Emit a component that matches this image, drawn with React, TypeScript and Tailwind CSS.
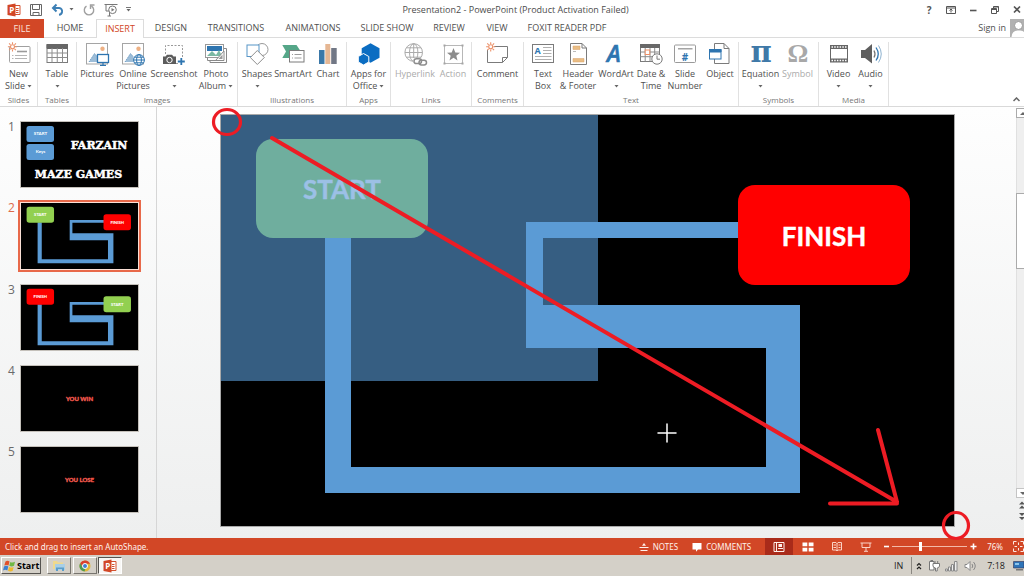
import type { ReactNode } from "react";

const BLUE = "#2e75b0";
const GRAY = "#7b7b7b";

function Glyph({ children }: { children: ReactNode }) {
  return (
    <svg viewBox="0 0 24 24" className="size-6 shrink-0 overflow-visible" fill="none" stroke={GRAY} strokeWidth="1" aria-hidden="true">
      {children}
    </svg>
  );
}

function Caret({ className = "" }: { className?: string }) {
  return (
    <svg viewBox="0 0 5 3" className={`inline-block h-[3px] w-[5px] shrink-0 ${className}`} aria-hidden="true">
      <path d="M0.5 0h4L2.5 2.5z" fill="#666" />
    </svg>
  );
}

function Burst({ x, y }: { x: number; y: number }) {
  return (
    <g transform={`translate(${x} ${y})`} stroke="#ec9169" strokeWidth="1.1">
      <circle r="2" fill="#fff" />
      <path d="M0-4.6V-2.6M0 2.6V4.6M-4.6 0H-2.6M2.6 0H4.6M-3.4-3.4L-2-2M2 2L3.4 3.4M-3.4 3.4L-2 2M2-2L3.4-3.4" />
    </g>
  );
}

function Photo() {
  return (
    <>
      <rect x="1.5" y="1.5" width="21" height="20.5" fill="#fff" stroke="#a5a5a5" />
      <circle cx="17.5" cy="6.8" r="2.2" fill="#eeb184" stroke="none" />
      <path d="M4 20L9.5 11.5L12.5 15V20z" fill="#9dbdd8" stroke="none" />
      <path d="M4 20L9.5 11.5L12.5 15" stroke="#6d9cc3" strokeDasharray="1.5 1" />
    </>
  );
}

const icons: Record<string, ReactNode> = {
  newSlide: (
    <Glyph>
      <rect x="2.5" y="4.5" width="20.500" height="16" rx="1" fill="#fff" stroke="#a0a0a0" />
      <path d="M10 9.500H20" stroke="#9a9a9a" strokeWidth="1.600" />
      <path d="M5 13.500H6.500M8 13.500H20M5 16.500H6.500M8 16.500H20" stroke="#b5b5b5" />
      <Burst x={5.500} y={4.800} />
    </Glyph>
  ),
  table: (
    <Glyph>
      <rect x="2" y="2.500" width="20.500" height="18" fill="#fff" />
      <path d="M2 2.500H22.500V6.500H2z" fill="#666" stroke="#666" />
      <path d="M2 11H22.500M2 15.500H22.500M7 6V20.500M12.250 6V20.500M17.500 6V20.500" stroke="#8d8d8d" />
    </Glyph>
  ),
  pictures: (
    <Glyph>
      <Photo />
      <rect x="12.500" y="12.500" width="11" height="8" fill="#fff" stroke={BLUE} strokeWidth="1.300" />
      <path d="M18 20.500V23M15 23.300H21" stroke={BLUE} strokeWidth="1.200" />
    </Glyph>
  ),
  online: (
    <Glyph>
      <Photo />
      <g stroke={BLUE}>
        <circle cx="18" cy="18" r="5.400" fill="#fff" />
        <ellipse cx="18" cy="18" rx="2.400" ry="5.400" />
        <path d="M12.600 18H23.400M13.500 15.200H22.500M13.500 20.800H22.500" />
      </g>
    </Glyph>
  ),
  screenshot: (
    <Glyph>
      <path d="M3.500 12V3.500H20.500V15M14 21.500H16" stroke="#999" strokeDasharray="2 1.500" />
      <path d="M1 14.500H3.500L5 12.800H10L11.500 14.500H14V22H1z" fill="#5c5c5c" stroke="none" />
      <circle cx="7.500" cy="18" r="2.700" fill="#5c5c5c" stroke="#fff" />
      <path d="M19.300 16V23M15.800 19.500H22.800" stroke={BLUE} strokeWidth="1.800" />
    </Glyph>
  ),
  album: (
    <Glyph>
      <rect x="1.500" y="2.500" width="18" height="13" fill="#fff" stroke="#999" />
      <rect x="3" y="4" width="15" height="5" fill={BLUE} stroke="none" />
      <path d="M3 14L8 9L12 13L15 8L18 14z" fill="#7bb9a3" stroke="none" />
      <path d="M20 6.500H22.500V20.500H6V18.500" stroke="#888" />
      <path d="M20 9L11.500 18.500H20z" fill="#fff" stroke="#8a8a8a" />
      <path d="M3.500 15.500V18.500H12" stroke="#8a8a8a" />
      <path d="M14.500 17L18.500 12.500V17z" fill="#9a9a9a" stroke="none" />
    </Glyph>
  ),
  shapes: (
    <Glyph>
      <circle cx="17" cy="7.500" r="6" fill="#fff" stroke="#999" />
      <rect x="2" y="3" width="12" height="11.500" fill="#fff" stroke="#5796c8" />
      <path d="M12.300 8.500L19.300 15.500L12.300 22.500L5.300 15.500z" fill="#fff" stroke="#8d8d8d" />
    </Glyph>
  ),
  smartart: (
    <Glyph>
      <path d="M1.300 3H15.500L19.500 9H8V16H1.300L5 9.500z" fill="#55a688" stroke="none" />
      <rect x="8.500" y="8.500" width="14.500" height="11.500" fill="#fff" />
      <path d="M11 12.500H12M13.500 12.500H20.500M11 16H12M13.500 16H20.500" stroke="#9c9c9c" />
    </Glyph>
  ),
  chart: (
    <Glyph>
      <g stroke="none">
        <rect x="3" y="8" width="5.500" height="14" fill="#3a78a8" />
        <rect x="9.300" y="2" width="5" height="20" fill="#e6b793" />
        <rect x="15.200" y="6" width="5.500" height="16" fill="#717785" />
      </g>
    </Glyph>
  ),
  apps: (
    <Glyph>
      <g fill="#0b6dc2">
        <path d="M13.500 1.200L22.500 6.200V15.800L13.500 20.800L4.700 15.800V6.200z" stroke="none" />
        <path d="M6.500 11.500L11.800 14.500V20L6.500 23L1.300 20V14.500z" stroke="#fff" />
      </g>
    </Glyph>
  ),
  hyperlink: (
    <Glyph>
      <g stroke="#ababab">
        <circle cx="10.700" cy="10.500" r="8.800" />
        <ellipse cx="10.700" cy="10.500" rx="4.200" ry="8.800" />
        <path d="M10.700 1.700V19.300M2 10.500H19.500M3.500 5.800H18M3.500 15.200H18" />
      </g>
      <path d="M10 16H24V24H10z" fill="#fff" stroke="none" />
      <g stroke="#8d8d8d" strokeWidth="1.500">
        <rect x="11" y="16.800" width="7.500" height="4.800" rx="2.400" />
        <rect x="16" y="18.200" width="7.500" height="4.800" rx="2.400" />
      </g>
    </Glyph>
  ),
  action: (
    <Glyph>
      <rect x="3.500" y="3.500" width="18" height="18" stroke="#b7b7b7" />
      <path d="M2.500 2.500h2v2h-2zM20.500 2.500h2v2h-2zM2.500 20.500h2v2h-2zM20.500 20.500h2v2h-2z" fill="#a5a5a5" stroke="none" />
      <path d="M12.500 6L14.300 10.500L19 10.800L15.300 13.800L16.500 18.500L12.500 15.800L8.500 18.500L9.700 13.800L6 10.800L10.700 10.500z" fill="#8c8c8c" stroke="none" />
    </Glyph>
  ),
  comment: (
    <Glyph>
      <path d="M1.500 8V20.500H16.500L21.500 15.500V4.500H8" fill="#fff" />
      <path d="M16.500 20.500V15.500H21.500" />
      <Burst x={4.700} y={4.800} />
    </Glyph>
  ),
  textBox: (
    <Glyph>
      <rect x="1.500" y="2.500" width="21" height="18" fill="#fff" />
      <text x="3.500" y="12" fill={BLUE} stroke="none" fontSize="9" fontWeight="700">A</text>
      <path d="M12 5.500H20.500M12 8.500H20.500M12 11.500H20.500M4 14.500H20.500M4 17.500H20.500" stroke="#b0b0b0" />
    </Glyph>
  ),
  header: (
    <Glyph>
      <path d="M4.500 1.500H16L20.500 6V22.500H4.500z" fill="#fff" />
      <path d="M16 1.500V6H20.500" />
      <path d="M7 4H14V7.500H7zM7 16.500H18V20H7z" fill="#e9bd84" stroke="#d9a06a" strokeWidth="0.500" />
      <path d="M7 9.500H10" stroke="#bbb" />
    </Glyph>
  ),
  wordart: (
    <Glyph>
      <text x="3" y="20" fill={BLUE} stroke={BLUE} strokeWidth="0.600" fontSize="23" fontWeight="600" fontStyle="italic">A</text>
    </Glyph>
  ),
  date: (
    <Glyph>
      <rect x="1.500" y="2.500" width="19" height="17" fill="#fff" />
      <path d="M1.500 2.500H20.500V5.500H1.500z" fill="#686868" stroke="#686868" />
      <path d="M1.500 10H20.500M1.500 14.700H20.500M6.200 6V19.500M11 6V19.500M15.700 6V19.500" stroke="#8c8c8c" />
      <rect x="6.200" y="8" width="4.500" height="4.500" fill="#fff" stroke="#ec9169" />
      <circle cx="18" cy="17" r="5.200" fill="#fff" />
      <path d="M18 13.500V17.200H21" />
    </Glyph>
  ),
  slideNumber: (
    <Glyph>
      <rect x="1.500" y="3" width="21" height="17.500" rx="1" fill="#fff" stroke="#9a9a9a" />
      <path d="M5 6.800H19.500" stroke="#8d8d8d" strokeWidth="1.200" />
      <text x="12" y="18.500" textAnchor="middle" fill={BLUE} stroke="none" fontSize="10" fontWeight="700">#</text>
    </Glyph>
  ),
  object: (
    <Glyph>
      <path d="M6.500 1.500H16L21 6.500V21.500H6.500z" fill="#fff" />
      <path d="M16 1.500V6.500H21" />
      <rect x="1.500" y="7.500" width="11.500" height="9.500" fill="#fff" stroke={BLUE} />
      <path d="M1.500 7.500H13V10H1.500z" fill={BLUE} stroke={BLUE} />
    </Glyph>
  ),
  equation: (
    <Glyph>
      <text x="12" y="20" textAnchor="middle" fill="#3f79a8" stroke="none" fontSize="29" fontWeight="700" fontFamily="DejaVu Serif, serif">π</text>
    </Glyph>
  ),
  symbol: (
    <Glyph>
      <text x="12" y="20" textAnchor="middle" fill="#a8a8a8" stroke="none" fontSize="26" fontWeight="700" fontFamily="Liberation Serif, serif">Ω</text>
    </Glyph>
  ),
  video: (
    <Glyph>
      <rect x="3" y="3" width="18" height="17.500" fill="#666" stroke="none" />
      <rect x="4" y="7" width="16" height="9.500" fill="#fff" stroke="none" />
      <path d="M4.500 5H20M4.500 18.500H20" stroke="#fff" strokeWidth="1.600" strokeDasharray="1.500 1.200" />
    </Glyph>
  ),
  audio: (
    <Glyph>
      <path d="M2 8H6L13 2V21.500L6 16H2z" fill="#5f5f5f" stroke="none" />
      <path d="M15 8.500Q17 12 15 15.500" stroke="#777" strokeWidth="1.300" />
      <path d="M17 5.500Q21.500 12 17 18.500" stroke={BLUE} strokeWidth="1.300" />
      <path d="M19.500 3.500Q25 12 19.500 20.500" stroke="#8fb3d0" />
    </Glyph>
  ),
};

type Tool = { icon: string; lines: string[]; width: string; menu?: boolean; disabled?: boolean };
type Group = { name: string; width: string; tools: Tool[] };

const groups: Group[] = [
  { name: "Slides", width: "w-[38px]", tools: [{ icon: "newSlide", lines: ["New", "Slide"], width: "w-9", menu: true }] },
  { name: "Tables", width: "w-[39px]", tools: [{ icon: "table", lines: ["Table", ""], width: "w-9", menu: true }] },
  {
    name: "Images",
    width: "w-[161px]",
    tools: [
      { icon: "pictures", lines: ["Pictures"], width: "w-9" },
      { icon: "online", lines: ["Online", "Pictures"], width: "w-9" },
      { icon: "screenshot", lines: ["Screenshot", ""], width: "w-[46px]", menu: true },
      { icon: "album", lines: ["Photo", "Album"], width: "w-[38px]", menu: true },
    ],
  },
  {
    name: "Illustrations",
    width: "w-[109px]",
    tools: [
      { icon: "shapes", lines: ["Shapes", ""], width: "w-[34px]", menu: true },
      { icon: "smartart", lines: ["SmartArt"], width: "w-[38px]" },
      { icon: "chart", lines: ["Chart"], width: "w-8" },
    ],
  },
  { name: "Apps", width: "w-[44px]", tools: [{ icon: "apps", lines: ["Apps for", "Office"], width: "w-10", menu: true }] },
  {
    name: "Links",
    width: "w-[81px]",
    tools: [
      { icon: "hyperlink", lines: ["Hyperlink"], width: "w-[44px]", disabled: true },
      { icon: "action", lines: ["Action"], width: "w-8", disabled: true },
    ],
  },
  { name: "Comments", width: "w-[52px]", tools: [{ icon: "comment", lines: ["Comment"], width: "w-[46px]" }] },
  {
    name: "Text",
    width: "w-[215px]",
    tools: [
      { icon: "textBox", lines: ["Text", "Box"], width: "w-[34px]" },
      { icon: "header", lines: ["Header", "& Footer"], width: "w-9" },
      { icon: "wordart", lines: ["WordArt", ""], width: "w-10", menu: true },
      { icon: "date", lines: ["Date &", "Time"], width: "w-[30px]" },
      { icon: "slideNumber", lines: ["Slide", "Number"], width: "w-[38px]" },
      { icon: "object", lines: ["Object"], width: "w-8" },
    ],
  },
  {
    name: "Symbols",
    width: "w-[80px]",
    tools: [
      { icon: "equation", lines: ["Equation", ""], width: "w-[38px]", menu: true },
      { icon: "symbol", lines: ["Symbol"], width: "w-9", disabled: true },
    ],
  },
  {
    name: "Media",
    width: "w-[70px]",
    tools: [
      { icon: "video", lines: ["Video", ""], width: "w-[34px]", menu: true },
      { icon: "audio", lines: ["Audio", ""], width: "w-[30px]", menu: true },
    ],
  },
];

const tabs = [
  { name: "HOME", width: "w-[52px]" },
  { name: "INSERT", width: "w-[48px]" },
  { name: "DESIGN", width: "w-[54px]" },
  { name: "TRANSITIONS", width: "w-[76px]" },
  { name: "ANIMATIONS", width: "w-[78px]" },
  { name: "SLIDE SHOW", width: "w-[70px]" },
  { name: "REVIEW", width: "w-[54px]" },
  { name: "VIEW", width: "w-[42px]" },
  { name: "FOXIT READER PDF", width: "w-[98px]" },
];

function PowerPointMark() {
  return (
    <svg viewBox="0 0 14 14" className="size-3.5 overflow-visible" aria-hidden="true">
      <path d="M7 2.500H13V11.500H7z" fill="#fff" stroke="#d35230" />
      <path d="M9 5.500H11.500M9 7.500H11.500M9 9.500H11.500" stroke="#d35230" />
      <path d="M0.500 2L8.500 0.500V13.500L0.500 12z" fill="#d24726" />
      <text x="2.200" y="10" fill="#fff" fontSize="8" fontWeight="700">P</text>
    </svg>
  );
}

function TitleBar() {
  return (
    <header className="flex h-[19px] items-center">
      <div className="flex flex-1 items-center pl-[7px]">
        <PowerPointMark />
        <button aria-label="Save" className="ml-2">
          <svg viewBox="0 0 14 14" className="size-3.5" fill="none" stroke="#666">
            <path d="M1.500 1.500H12.500V12.500H1.500zM3.500 1.500V6.500H10.500V1.500M4 12.500V9.500H10V12.500" />
          </svg>
        </button>
        <button aria-label="Undo" className="ml-2 flex items-center gap-1">
          <svg viewBox="0 0 14 14" className="size-3.5" fill="none" stroke="#3c7fb5" strokeWidth="2">
            <path d="M5.500 1.500L2 5L5.500 8.500M2.500 5H8Q11.500 5.500 11 9Q10.500 11.500 8 11.800" />
          </svg>
          <Caret />
        </button>
        <button aria-label="Repeat" className="ml-2">
          <svg viewBox="0 0 14 14" className="size-3.5" fill="none" stroke="#a0a0a0" strokeWidth="1.400">
            <path d="M4.500 3.200A4.700 4.700 0 1 0 9.500 3.200M8.500 6V2H12.500" />
          </svg>
        </button>
        <button aria-label="Start from beginning" className="ml-2">
          <svg viewBox="0 0 14 14" className="size-3.5" fill="none" stroke="#777">
            <path d="M0.500 1.500H13.500M2 1.500V8H5M3.500 13H7M5.500 8V13" />
            <circle cx="8.500" cy="6.800" r="3.800" fill="#fff" />
            <path d="M7.500 5L10.500 6.800L7.500 8.600z" fill="#777" stroke="none" />
          </svg>
        </button>
        <button aria-label="Customize quick access" className="ml-2 flex flex-col items-center gap-px">
          <span className="h-px w-[5px] bg-[#777]" />
          <Caret />
        </button>
      </div>
      <h1 className="text-[9px] leading-3 text-[#4c4c4c]">Presentation2 - PowerPoint (Product Activation Failed)</h1>
      <div className="flex flex-1 justify-end gap-2 text-[#555]">
        <button aria-label="Help" className="w-3.5 text-[10px] leading-3.5 font-bold">?</button>
        <button aria-label="Ribbon display options">
          <svg viewBox="0 0 14 14" className="size-3.5" fill="none" stroke="currentColor">
            <path d="M2.500 3.500H11.500V10.500H2.500zM2.500 5H11.500M7 6V9.500M5.500 7.500L7 6L8.500 7.500" />
          </svg>
        </button>
        <button aria-label="Minimize">
          <svg viewBox="0 0 14 14" className="size-3.5" stroke="currentColor" strokeWidth="1.600"><path d="M4 7.500H10.500" /></svg>
        </button>
        <button aria-label="Restore">
          <svg viewBox="0 0 14 14" className="size-3.5" fill="none" stroke="currentColor">
            <path d="M5.500 5.500V3.500H10.500V8.500H8.500M3.500 5.500H8.500V10.500H3.500zM3.500 6.500H8.500M5.500 4H10.500" />
          </svg>
        </button>
        <button aria-label="Close">
          <svg viewBox="0 0 14 14" className="size-3.5" stroke="currentColor" strokeWidth="1.700"><path d="M4 3.500L10 9.500M10 3.500L4 9.500" /></svg>
        </button>
      </div>
    </header>
  );
}

function TabRow() {
  return (
    <nav className="flex h-[19px] text-[9px] leading-3 whitespace-nowrap text-[#4f4f4f]">
      <button className="w-11 bg-[#d24726] text-[#fbe3da]">FILE</button>
      <div className="flex flex-1 border-b border-[#dcdcdc]">
        {tabs.map((tab) =>
          tab.name === "INSERT" ? (
            <button key={tab.name} aria-current="page" className={`${tab.width} -mb-px border border-b-0 border-[#dcdcdc] bg-white text-[#d24726]`}>
              {tab.name}
            </button>
          ) : (
            <button key={tab.name} className={tab.width}>
              {tab.name}
            </button>
          ),
        )}
        <a href="#account" className="ml-auto flex items-center gap-1">
          Sign in
          <svg viewBox="0 0 14 18" className="h-[18px] w-3.5" aria-hidden="true">
            <path d="M0 0H14V18H0z" fill="#b1b1b1" />
            <circle cx="8.500" cy="6.500" r="4" fill="#fff" stroke="#999" />
            <path d="M1.500 18Q2 11 8.500 11.500Q13 11 14 13V18z" fill="#fff" />
          </svg>
        </a>
      </div>
    </nav>
  );
}

function Ribbon() {
  return (
    <section aria-label="Insert" className="flex border-b border-[#d9d9d9] text-[9px] leading-3 text-[#505050]">
      {groups.map((group) => (
        <div key={group.name} className={`${group.width} flex shrink-0 flex-col pt-1`}>
          <div className="flex flex-1 flex-col border-r border-[#e1e1e1]">
            <div className="flex h-[52px] justify-center">
              {group.tools.map((tool) => (
                <button
                  key={tool.icon}
                  disabled={tool.disabled}
                  className={`${tool.width} flex shrink-0 flex-col items-center whitespace-nowrap disabled:text-[#ababab]`}
                >
                  {icons[tool.icon]}
                  <span className="mt-0.5">{tool.lines[0]}</span>
                  {tool.lines.length > 1 && (
                    <span className="flex h-3 items-center gap-0.5">
                      {tool.lines[1]}
                      {tool.menu && <Caret />}
                    </span>
                  )}
                </button>
              ))}
            </div>
            <span className="text-center text-[8px] leading-3 text-[#777]">{group.name}</span>
          </div>
        </div>
      ))}
      <button aria-label="Collapse the ribbon" className="mt-auto mr-1 mb-1 ml-auto">
        <svg viewBox="0 0 7 5" className="h-[5px] w-[7px]" fill="none" stroke="#666" strokeWidth="1.500"><path d="M0.500 4L3.500 1L6.500 4" /></svg>
      </button>
    </section>
  );
}

type MazeProps = { left: string; right: string; leftFill: string; rightFill: string; leftText?: string; children?: ReactNode };

function Maze({ left, right, leftFill, rightFill, leftText = "#fff", children }: MazeProps) {
  return (
    <svg viewBox="0 0 733 411" className="block w-full overflow-visible bg-black" role="img" aria-label={`Maze from ${left} to ${right}`}>
      {children}
      <path d="M104 120V378H579V190H322V123H520V107H305V233H545V352H130V120z" fill="#5b9bd5" />
      <rect x="35" y="24" width="172" height="99" rx="17" fill={leftFill} />
      <rect x="517" y="70" width="172" height="100" rx="17" fill={rightFill} />
      <g fontFamily="Lato, sans-serif" fontWeight="700" fontSize="26" textAnchor="middle">
        <text x="121" y="84" fill={leftText} stroke={leftText} strokeWidth="0.400">{left}</text>
        <text x="603" y="131" fill="#fff" stroke="#fff" strokeWidth="0.400">{right}</text>
      </g>
    </svg>
  );
}

function TitleSlide() {
  return (
    <svg viewBox="0 0 117 65" className="block w-full bg-black" role="img" aria-label="Farzain maze games">
      <rect x="5.500" y="4" width="27.500" height="16" rx="2.500" fill="#5b9bd5" />
      <rect x="5.500" y="22" width="27.500" height="16" rx="2.500" fill="#5b9bd5" />
      <g fill="#fff" textAnchor="middle">
        <text x="19.500" y="13" fontSize="4.500" fontWeight="700" fontFamily="Lato, sans-serif">START</text>
        <text x="19.500" y="31" fontSize="4.500" fontWeight="700" fontFamily="Lato, sans-serif">Keys</text>
        <g fontFamily="DejaVu Serif, serif" fontWeight="700" stroke="#fff" strokeWidth="0.500">
          <text x="78" y="26.500" fontSize="11">FARZAIN</text>
          <text x="57.500" y="55.500" fontSize="11">MAZE GAMES</text>
        </g>
      </g>
    </svg>
  );
}

function MessageSlide({ text }: { text: string }) {
  return (
    <svg viewBox="0 0 117 65" className="block w-full bg-black" role="img" aria-label={text}>
      <text x="58.500" y="34.500" fontSize="6" fontWeight="700" fontFamily="Lato, sans-serif" textAnchor="middle" fill="#ff9a90" stroke="#e8392c" strokeWidth="0.400">
        {text}
      </text>
    </svg>
  );
}

const GREEN = "#92d050";
const RED = "#ff0000";

const slides: ReactNode[] = [
  <TitleSlide />,
  <Maze left="START" right="FINISH" leftFill={GREEN} rightFill={RED} />,
  <Maze left="FINISH" right="START" leftFill={RED} rightFill={GREEN} />,
  <MessageSlide text="YOU WIN" />,
  <MessageSlide text="YOU LOSE" />,
];

function SlideList() {
  return (
    <aside className="w-[157px] shrink-0 border-r border-[#d6d6d6] pt-3.5">
      <ol className="flex flex-col gap-3.5">
        {slides.map((slide, index) => (
          <li key={index} className="flex gap-1.5 pr-[17px] pl-2">
            <span className={`w-1.5 text-[12px] leading-3 ${index === 1 ? "text-[#dd6a4b]" : "text-[#6a6a6a]"}`}>{index + 1}</span>
            <button
              aria-label={`Slide ${index + 1}`}
              className={`flex-1 border bg-black ${index === 1 ? "border-[#fbe0d6] outline-2 outline-[#e8694a]" : "border-[#c4c0ba]"}`}
            >
              {slide}
            </button>
          </li>
        ))}
      </ol>
    </aside>
  );
}

function Canvas() {
  return (
    <main className="min-w-0 flex-1 pt-2 pr-[62px] pb-3 pl-16">
      <div className="relative z-10 outline outline-[#a9a9a9]">
        <Maze left="START" right="FINISH" leftFill="#6fae9e" rightFill={RED} leftText="#9cc0e6">
          <rect width="377" height="266" fill="#365e82" />
        </Maze>
        <svg viewBox="0 0 733 411" className="pointer-events-none absolute inset-0 w-full overflow-visible" fill="none" stroke="#ed1c24" strokeLinecap="round" aria-hidden="true">
          <path d="M51 23L676 387M657 315L676 387M609 388.500H676" strokeWidth="4" />
          <ellipse cx="6" cy="7" rx="13.500" ry="12.500" strokeWidth="3.200" />
          <ellipse cx="735" cy="410.500" rx="12.500" ry="13" strokeWidth="3.200" />
          <path d="M437 318H455M446 309V327" stroke="#fff" strokeWidth="1.500" />
        </svg>
      </div>
    </main>
  );
}

function ScrollColumn() {
  return (
    <div className="flex w-2 shrink-0 flex-col overflow-hidden pt-px">
      <button aria-label="Scroll up" className="h-2.5 w-3.5 border border-[#ababab] bg-white">
        <svg viewBox="0 0 12 8" className="w-3" aria-hidden="true"><path d="M3 6L6 3L9 6z" fill="#666" /></svg>
      </button>
      <div className="flex flex-1 flex-col border-l border-[#e0e0e0] bg-[#efefef]">
        <div className="flex-[75]" />
        <div className="-ml-px w-3.5 flex-[74] border border-[#ababab] bg-white" />
        <div className="flex-[220]" />
      </div>
      <button aria-label="Scroll down" className="h-2.5 w-3.5 border border-[#c4c4c4] bg-white">
        <svg viewBox="0 0 12 8" className="w-3" aria-hidden="true"><path d="M3 3L6 6L9 3z" fill="#666" /></svg>
      </button>
      <button aria-label="Previous slide" className="w-3.5 pt-0.5">
        <svg viewBox="0 0 14 11" className="w-3.5" aria-hidden="true"><path d="M3 4.500L6 1.500L9 4.500zM3 8.500L6 5.500L9 8.500z" fill="#555" /></svg>
      </button>
      <button aria-label="Next slide" className="mb-4 w-3.5">
        <svg viewBox="0 0 14 11" className="w-3.5" aria-hidden="true"><path d="M3 2L6 5L9 2zM3 6L6 9L9 6z" fill="#555" /></svg>
      </button>
    </div>
  );
}

function StatusBar() {
  return (
    <footer className="flex h-[17px] items-center bg-[#d24726] font-['Noto_Sans',sans-serif] text-[8px] leading-3 whitespace-nowrap text-[#fff1ec]">
      <p className="flex-1 pl-[5px]">Click and drag to insert an AutoShape.</p>
      <button className="flex items-center gap-1">
        <svg viewBox="0 0 10 10" className="size-2.5" fill="none" stroke="currentColor"><path d="M0.500 5.500H9.500M1.500 8.500H8.500" /><path d="M3 3.800L5 1L7 3.800z" fill="currentColor" stroke="none" /></svg>
        NOTES
      </button>
      <button className="ml-3.5 flex items-center gap-1">
        <svg viewBox="0 0 10 10" className="size-2.5"><path d="M0.500 1H9.500V7.500H6L4 9.800V7.500H0.500z" fill="#fff" /></svg>
        COMMENTS
      </button>
      <button aria-label="Normal view" className="ml-3.5 flex h-full w-7 items-center justify-center bg-[#a92b1a]">
        <svg viewBox="0 0 12 10" className="h-2.5 w-3" fill="none" stroke="currentColor"><path d="M1 0.500H11V9.500H1zM3.500 0.500V9.500M5 6.500H10" /><path d="M5.500 2H9V5H5.500z" fill="currentColor" stroke="none" /></svg>
      </button>
      <button aria-label="Slide sorter" className="flex w-[29px] justify-center">
        <svg viewBox="0 0 12 10" className="h-2.5 w-3" fill="#fff"><path d="M0.500 0.500H5.300V4.300H0.500zM6.700 0.500H11.500V4.300H6.700zM0.500 5.700H5.300V9.500H0.500zM6.700 5.700H11.500V9.500H6.700z" /></svg>
      </button>
      <button aria-label="Reading view" className="flex w-[29px] justify-center">
        <svg viewBox="0 0 12 10" className="h-2.5 w-3" fill="none" stroke="#fbd3c6"><path d="M1.500 0.500H5L6 1.500L7 0.500H10.500V8H7L6 9L5 8H1.500zM6 1V9M2.500 3H5M2.500 5.500H5M7.500 3H9.500M7.500 5.500H9.500" /></svg>
      </button>
      <button aria-label="Slide show" className="flex w-[29px] justify-center">
        <svg viewBox="0 0 12 10" className="h-2.5 w-3" fill="none" stroke="#fbd3c6"><path d="M0.500 1H11.500M2 1V5.500H10V1M6 5.500V9M4 9.300H8" /></svg>
      </button>
      <button aria-label="Zoom out" className="flex w-3 justify-center">
        <svg viewBox="0 0 7 7" className="size-[7px]" stroke="#fff" strokeWidth="1.600"><path d="M1 3.500H6" /></svg>
      </button>
      <input
        type="range"
        aria-label="Zoom"
        min={0}
        max={100}
        defaultValue={37}
        className="h-2.5 w-[75px] appearance-none bg-transparent [&::-webkit-slider-runnable-track]:h-px [&::-webkit-slider-runnable-track]:bg-[#f3b9a8] [&::-webkit-slider-thumb]:-mt-1 [&::-webkit-slider-thumb]:h-[9px] [&::-webkit-slider-thumb]:w-[3px] [&::-webkit-slider-thumb]:appearance-none [&::-webkit-slider-thumb]:bg-white"
      />
      <button aria-label="Zoom in" className="flex w-3 justify-center">
        <svg viewBox="0 0 7 7" className="size-[7px]" stroke="#fff" strokeWidth="1.600"><path d="M0.500 3.500H6.500M3.500 0.500V6.500" /></svg>
      </button>
      <span className="ml-2">76%</span>
      <button aria-label="Fit slide to window" className="ml-2.5">
        <svg viewBox="0 0 11 11" className="size-[11px]" fill="none" stroke="#fde9e2"><path d="M0.500 3.500V0.500H3.500M7.500 0.500H10.500V3.500M10.500 7.500V10.500H7.500M3.500 10.500H0.500V7.500M5.500 1.500V4M5.500 7V9.500M1.500 5.500H4M7 5.500H9.500" /></svg>
      </button>
    </footer>
  );
}

function Taskbar() {
  return (
    <div className="flex h-[21px] items-center bg-[#d4d0c8] pl-px text-[9px] leading-3 text-[#222]">
      <button className="flex h-[17px] w-10 items-center gap-px border border-t-white border-r-[#55534f] border-b-[#55534f] border-l-white pl-px font-bold text-black">
        <svg viewBox="0 0 13 12" className="h-3 w-[13px] shrink-0" aria-hidden="true">
          <path d="M2.500 1.500Q4.500 0 6.500 1.500L5.500 5.500Q3.500 4.300 1.300 5.500z" fill="#e2502a" />
          <path d="M7.300 2Q9.500 3.200 12 1.800L11 5.800Q8.500 7 6.300 5.800z" fill="#6fb843" />
          <path d="M1 6.500Q3.300 5.200 5.300 6.500L4.300 10.500Q2.300 9.200 0 10.500z" fill="#3c7fd0" />
          <path d="M6 7Q8.500 8.200 10.700 7L9.600 11Q7.300 12 5 10.800z" fill="#f0b92c" />
        </svg>
        Start
      </button>
      <button aria-label="File explorer" className="ml-1.5 flex h-[17px] w-6 items-center justify-center border border-t-white border-r-[#77746e] border-b-[#77746e] border-l-white">
        <svg viewBox="0 0 14 12" className="h-3 w-3.5" aria-hidden="true">
          <path d="M1 1H5L6 2.500H11V9H1z" fill="#efd98d" />
          <path d="M3 4H13V10H3z" fill="#a9cfe6" />
          <path d="M4 11V7.500H12V11H10V9H6V11z" fill="#5b9dc9" />
        </svg>
      </button>
      <button aria-label="Chrome" className="ml-0.5 flex h-[17px] w-6 items-center justify-center border border-t-white border-r-[#77746e] border-b-[#77746e] border-l-white">
        <svg viewBox="0 0 12 12" className="size-3" aria-hidden="true">
          <circle cx="6" cy="6" r="5.500" fill="#e0b83a" />
          <path d="M1.200 3.200A5.500 5.500 0 0 1 11 3.800H6L3.500 7z" fill="#d8402f" />
          <path d="M1.200 3.200L4 8L6.500 8.500L5.500 11.500A5.500 5.500 0 0 1 1.200 3.200z" fill="#4a9a52" />
          <circle cx="6" cy="6" r="2.500" fill="#3d7fd1" stroke="#fff" />
        </svg>
      </button>
      <button aria-label="PowerPoint" className="ml-px flex h-[17px] w-6 items-center justify-center border border-t-[#55534f] border-r-white border-b-white border-l-[#55534f] bg-[#f8f7f5]">
        <PowerPointMark />
      </button>
      <span className="ml-auto">IN</span>
      <div className="ml-2 flex h-[17px] items-center border-l border-[#8b8882]">
        <svg viewBox="0 0 6 8" className="ml-1 h-2 w-1.5" fill="none" stroke="#222" strokeWidth="1.200" aria-hidden="true"><path d="M1 3.500L3 1.500L5 3.500M1 7L3 5L5 7" /></svg>
        <svg viewBox="0 0 13 13" className="ml-1.5 size-[13px]" fill="#fff" stroke="#777" aria-hidden="true">
          <path d="M1.500 2.500H6V11H1.500zM2.500 1.500H5" />
          <path d="M5 4.500H11.500V7Q11 9 9.200 9V12H7.500V9Q5.500 9 5 7zM7 4.500V2M9.700 4.500V2" />
        </svg>
        <svg viewBox="0 0 13 12" className="ml-1 h-3 w-[13px]" fill="#eee" stroke="#8a8a8a" aria-hidden="true">
          <path d="M0.500 9H2.500V11H0.500zM3.500 7H5.500V11H3.500zM6.500 4.500H8.500V11H6.500zM9.500 1.500H12V11H9.500z" />
        </svg>
        <svg viewBox="0 0 13 12" className="ml-1.5 h-3 w-[13px]" fill="none" stroke="#888" aria-hidden="true">
          <path d="M1 4.500H3L6 1.500V10.500L3 7.500H1z" fill="#fff" />
          <path d="M8 4Q9.500 6 8 8M9.500 2Q13 6 9.500 10" />
        </svg>
        <span className="ml-2.5">7:18</span>
        <svg viewBox="0 0 11 11" className="ml-2 size-[11px]" aria-hidden="true">
          <path d="M0.500 1.500H11V8H0.500z" fill="#2f74b8" stroke="#335" strokeWidth="0.600" />
          <path d="M2 3H6V5H2z" fill="#8cc4ec" />
          <path d="M3 9H10V10.500H3z" fill="#777" />
        </svg>
      </div>
    </div>
  );
}

export default function App() {
  return (
    <div className="flex min-h-screen flex-col bg-white font-['Open_Sans','Noto_Sans',sans-serif] text-[#444]">
      <TitleBar />
      <TabRow />
      <Ribbon />
      <div className="flex flex-1 bg-linear-to-b from-[#fefefe] to-[#eeefef]">
        <SlideList />
        <Canvas />
        <ScrollColumn />
      </div>
      <StatusBar />
      <Taskbar />
    </div>
  );
}
